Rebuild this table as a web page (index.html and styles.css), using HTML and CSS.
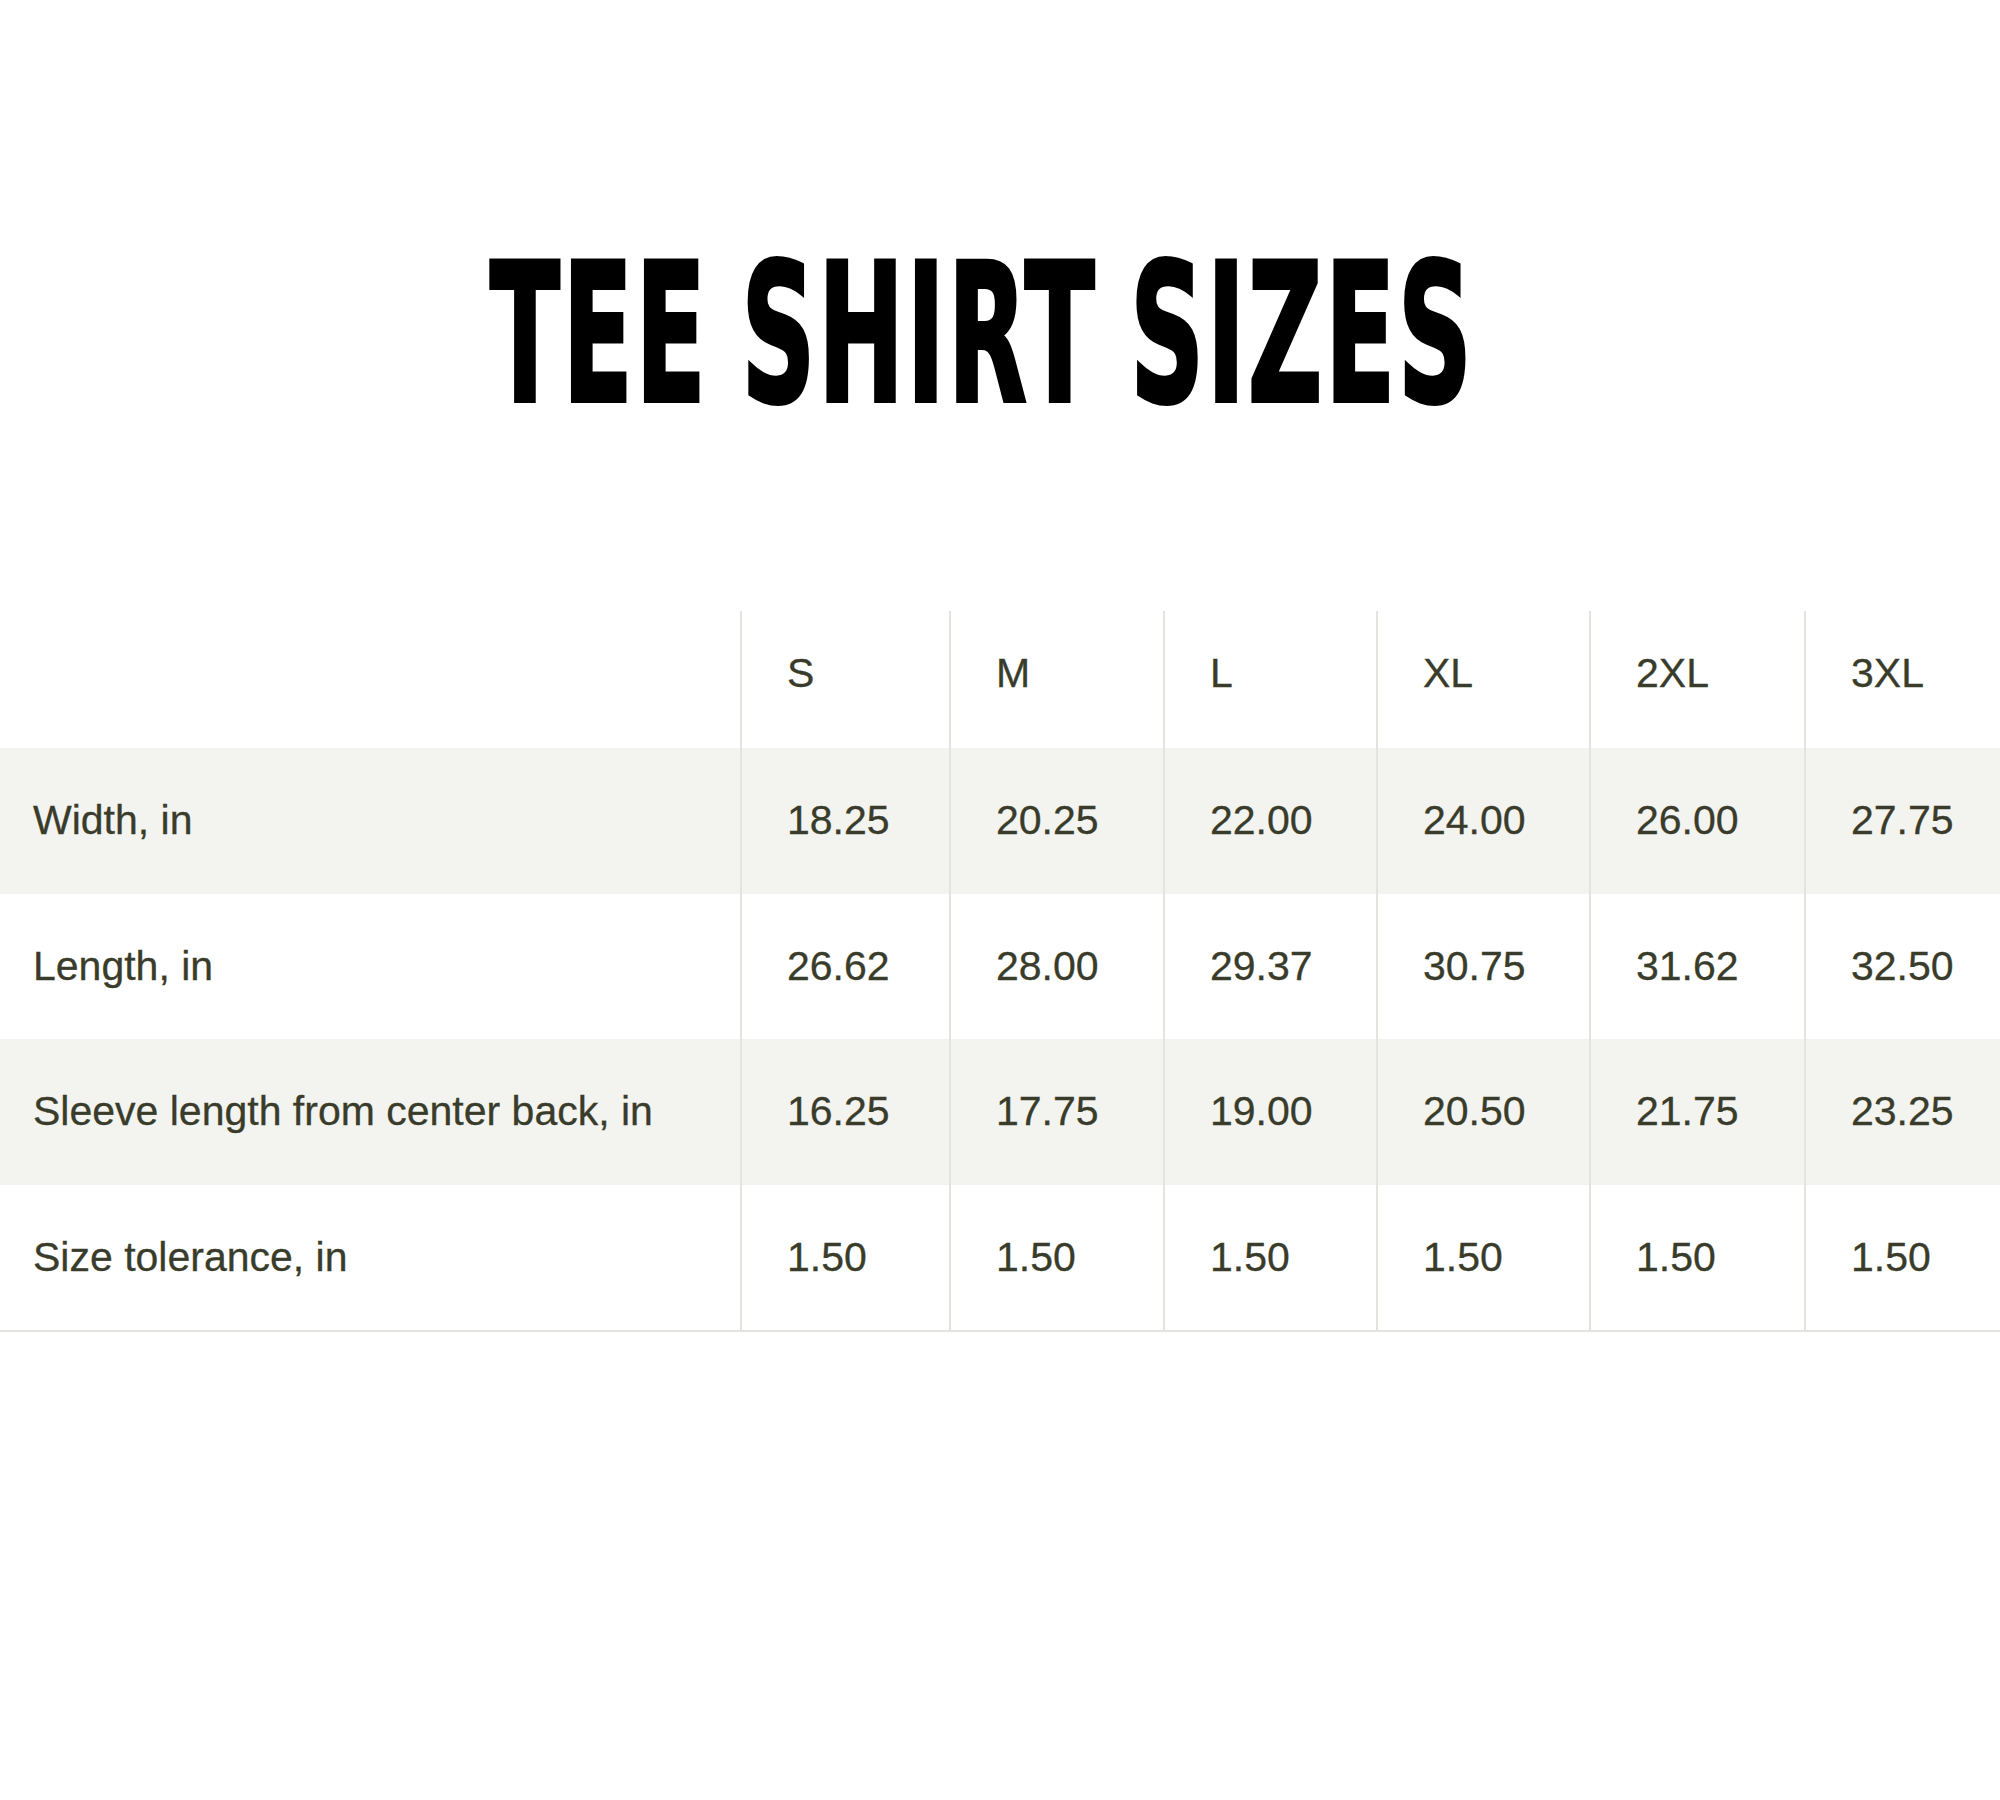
FILE: index.html
```html
<!DOCTYPE html>
<html lang="en">
<head>
<meta charset="utf-8">
<title>Tee Shirt Sizes</title>
<link rel="stylesheet" href="styles.css">
</head>
<body>
<main class="page">
  <h1 class="title"><span class="title-text">TEE SHIRT SIZES</span></h1>
  <table class="sizes">
    <colgroup>
      <col class="c-label">
      <col class="c-s">
      <col class="c-m">
      <col class="c-l">
      <col class="c-xl">
      <col class="c-2xl">
      <col class="c-3xl">
    </colgroup>
    <thead>
      <tr>
        <th class="label"></th>
        <th>S</th>
        <th>M</th>
        <th>L</th>
        <th>XL</th>
        <th>2XL</th>
        <th>3XL</th>
      </tr>
    </thead>
    <tbody>
      <tr class="stripe">
        <td class="label">Width, in</td>
        <td>18.25</td><td>20.25</td><td>22.00</td><td>24.00</td><td>26.00</td><td>27.75</td>
      </tr>
      <tr>
        <td class="label">Length, in</td>
        <td>26.62</td><td>28.00</td><td>29.37</td><td>30.75</td><td>31.62</td><td>32.50</td>
      </tr>
      <tr class="stripe">
        <td class="label">Sleeve length from center back, in</td>
        <td>16.25</td><td>17.75</td><td>19.00</td><td>20.50</td><td>21.75</td><td>23.25</td>
      </tr>
      <tr class="last">
        <td class="label">Size tolerance, in</td>
        <td>1.50</td><td>1.50</td><td>1.50</td><td>1.50</td><td>1.50</td><td>1.50</td>
      </tr>
    </tbody>
  </table>
</main>
</body>
</html>
```

FILE: styles.css
```css
html, body {
  margin: 0;
  padding: 0;
  background: #ffffff;
}

.page {
  width: 2000px;
  overflow: hidden;
  padding-top: 239px;
}

.title {
  margin: 0;
  height: 193px;
  padding-right: 36px;
  font-family: "DejaVu Sans Condensed", "DejaVu Sans", sans-serif;
  font-stretch: condensed;
  font-weight: 700;
  font-size: 192px;
  line-height: 1;
  color: #000000;
  text-align: center;
  white-space: nowrap;
}

.title-text {
  display: inline-block;
  transform: scaleX(0.593);
  transform-origin: center;
  letter-spacing: 5px;
  word-spacing: -10px;
  -webkit-text-stroke: 4px #000000;
}

.sizes {
  margin-top: 179px;
  width: 2000px;
  table-layout: fixed;
  border-collapse: collapse;
  font-family: "Liberation Sans", Arial, sans-serif;
  font-size: 41px;
  color: #3a3c2b;
  -webkit-text-stroke: 0.3px #3a3c2b;
}

.c-label { width: 741px; }
.c-s { width: 209px; }
.c-m { width: 214px; }
.c-l { width: 213px; }
.c-xl { width: 213px; }
.c-2xl { width: 215px; }
.c-3xl { width: 195px; }

.sizes th,
.sizes td {
  padding: 0 0 0 45px;
  text-align: left;
  font-weight: 400;
  vertical-align: middle;
  border-left: 2px solid #e3e3df;
  white-space: nowrap;
}

.sizes .label {
  border-left: none;
  padding-left: 33px;
}

.sizes thead th {
  height: 125px;
  padding-bottom: 12px;
}

.sizes tbody td {
  height: 145.5px;
}

.sizes tr.stripe td {
  background: #f3f3f0;
}

.sizes tr.last td {
  border-bottom: 2px solid #e3e3df;
}
```
